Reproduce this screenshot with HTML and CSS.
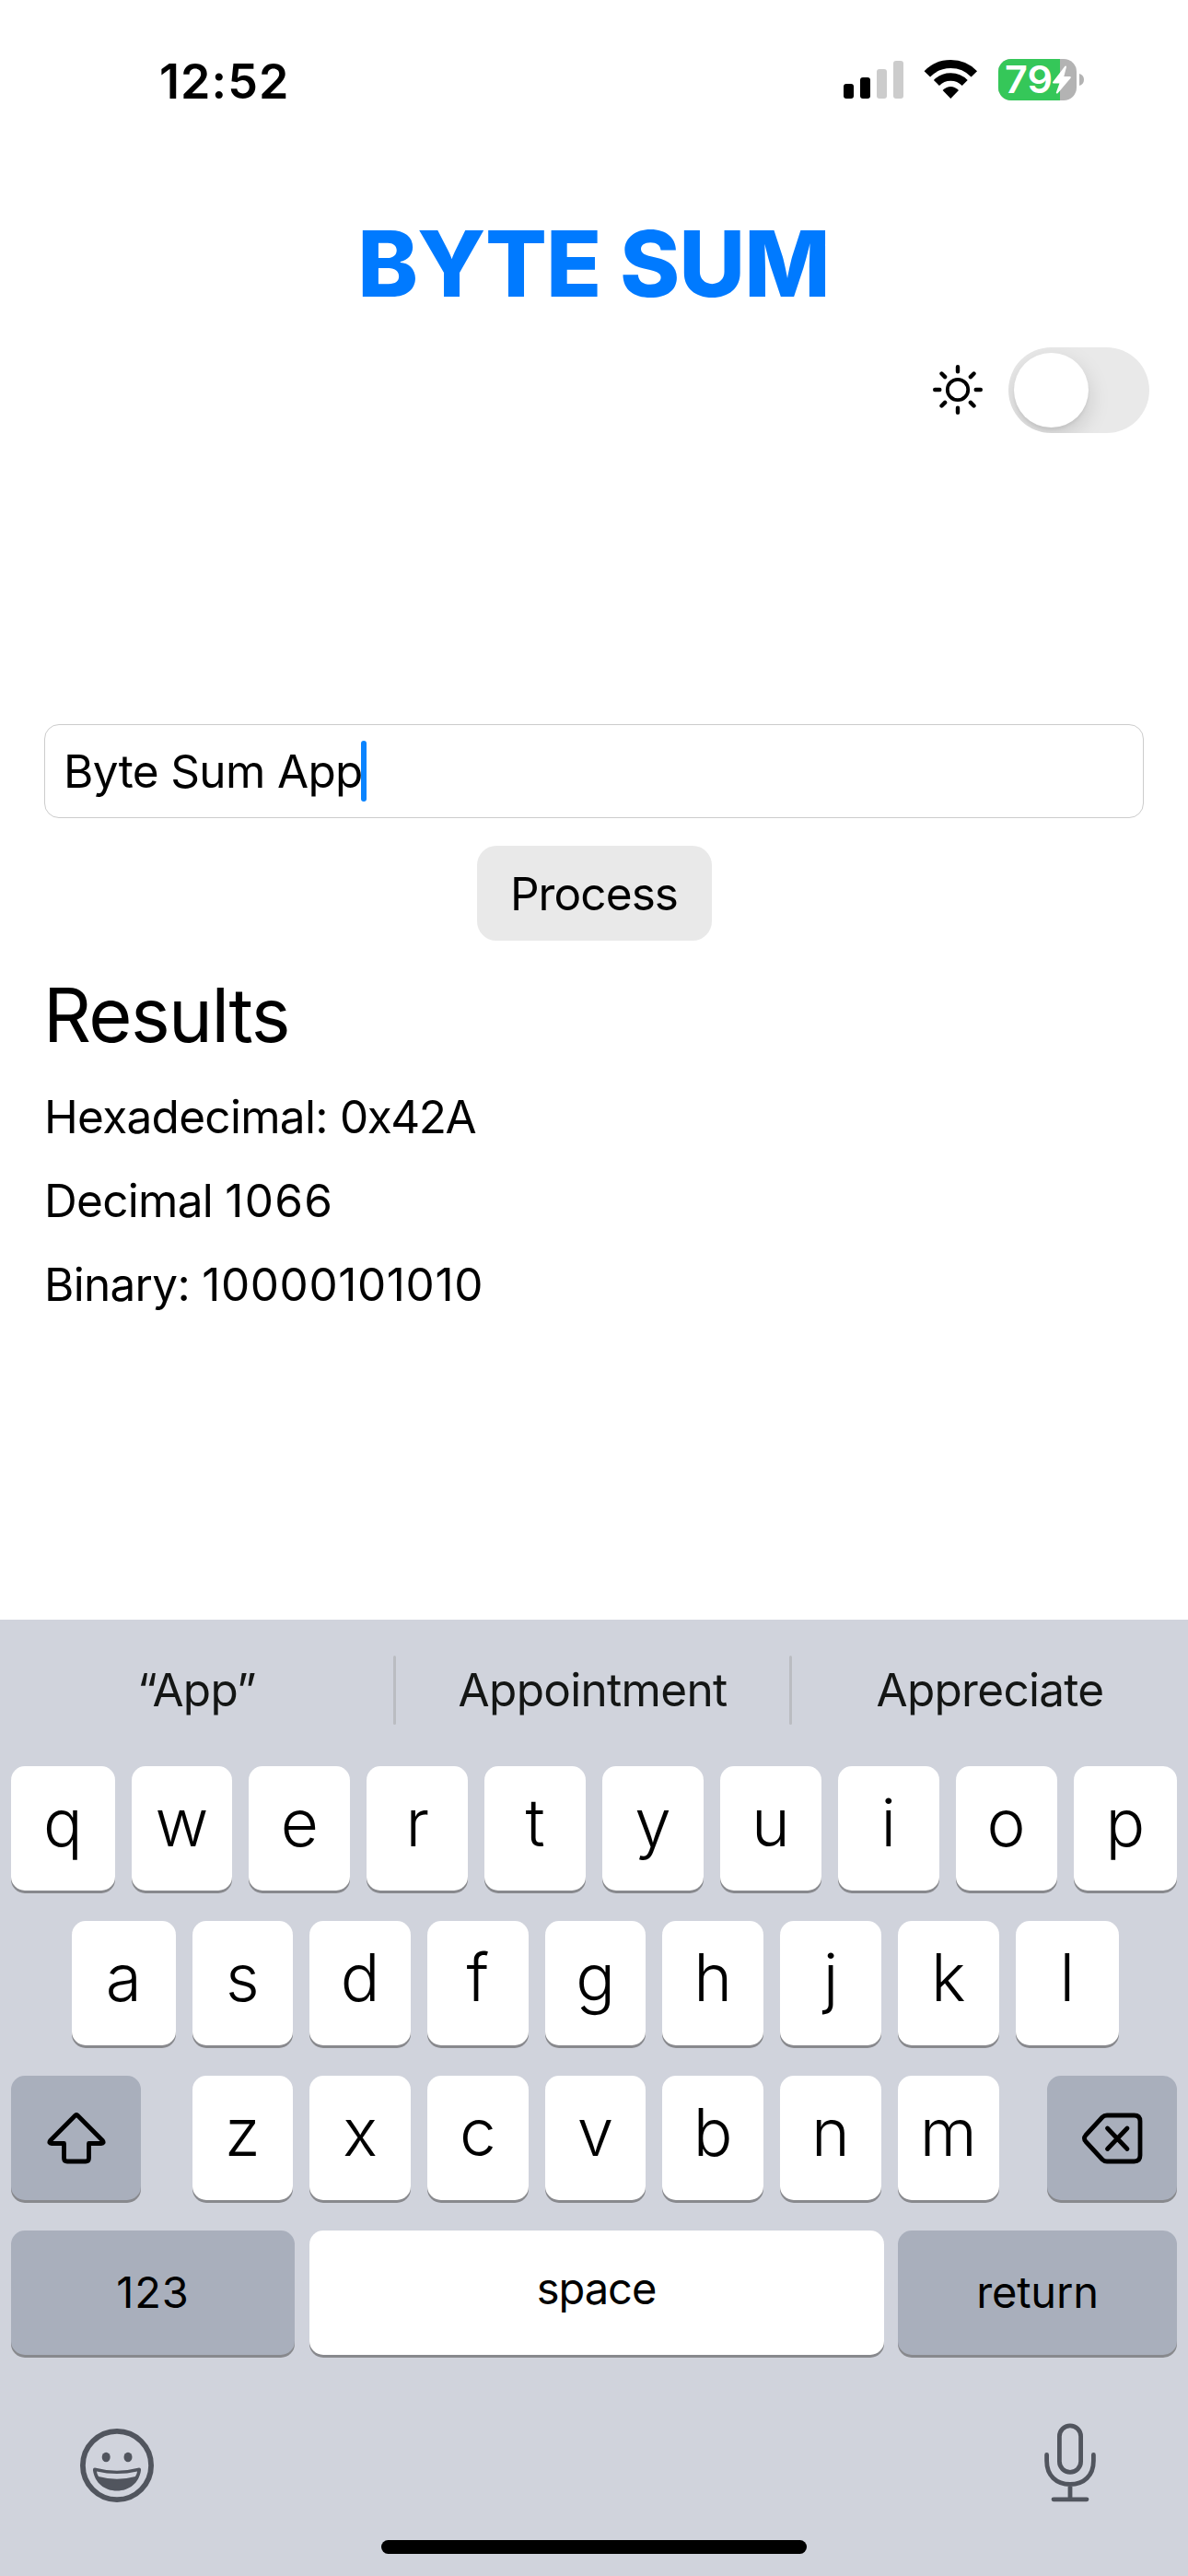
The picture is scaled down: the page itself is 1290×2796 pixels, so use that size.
FILE: index.html
```html
<!DOCTYPE html>
<html lang="en">
<head>
    <meta charset="UTF-8">
    <meta name="viewport" content="width=device-width, initial-scale=1.0">
    <title>Byte Sum</title>
    <link rel="stylesheet" href="styles.css">
</head>
<body>

<!-- Status bar -->
<div class="status-bar">
    <div class="time">12:52</div>
    <svg class="status-icons" width="262" height="50" viewBox="0 0 262 50">
        <rect x="0" y="29" width="11" height="16" rx="3"/>
        <rect x="18" y="22" width="11" height="23" rx="3"/>
        <rect x="36" y="13" width="11" height="32" rx="3" fill="#cccccc"/>
        <rect x="54" y="4" width="11" height="41" rx="3" fill="#cccccc"/>

        <g fill="none" stroke="#000">
            <path d="M90.8 18.3A35.5 35.5 0 0 1 141.8 18.3" stroke-width="9"/>
            <path d="M100.9 28A21.5 21.5 0 0 1 131.7 28" stroke-width="8.4"/>
        </g>
        <path d="M107.6 36Q116.3 28 125 36L116.3 45Z"/>

        <clipPath id="batteryShape"><rect x="168" y="2" width="85" height="45" rx="14"/></clipPath>
        <g clip-path="url(#batteryShape)">
            <rect x="168" y="2" width="85" height="45" fill="#b3b3b3"/>
            <rect x="168" y="2" width="67" height="45" fill="#35c759"/>
        </g>
        <path d="M256 18C259.500 19 261 21.500 261 24.500C261 27.500 259.500 30 256 31Z" fill="#b3b3b3"/>
        <text class="battery-text" x="175" y="39.300" textLength="52" lengthAdjust="spacingAndGlyphs">79</text>
        <path d="M241 10.500L228 27.500H235.800L231.800 38.500L245.800 22H238Z" fill="#fff" stroke="#fff" stroke-width="2" stroke-linejoin="round"/>
    </svg>
</div>

<h1>BYTE SUM</h1>

<!-- Theme switch -->
<div class="theme-row">
    <svg class="sun" width="54" height="54" viewBox="0 0 54 54" fill="none" stroke="#000" stroke-linecap="round">
        <circle cx="27" cy="27" r="11.200" stroke-width="3.800"/>
        <path stroke-width="4.400" d="M27 2.200V7.300M27 46.700V51.800M2.200 27H7.300M46.700 27H51.800M9.500 9.500L13.100 13.100M40.900 40.900L44.500 44.500M9.500 44.500L13.100 40.900M40.900 13.100L44.500 9.500"/>
    </svg>
    <div class="switch"><div class="knob"></div></div>
</div>

<div class="container">
    <div class="text-field"><span>Byte Sum App</span><div class="caret"></div></div>
    <button class="process-button">Process</button>

    <h2>Results</h2>
    <p>Hexadecimal: <span class="hex-value">0x42A</span></p>
    <p>Decimal <span class="dec-value">1066</span></p>
    <p>Binary: <span class="bin-value">10000101010</span></p>
</div>

<!-- Keyboard -->
<div class="keyboard">
    <div class="suggestions">
        <div>“App”</div>
        <div class="divider"></div>
        <div>Appointment</div>
        <div class="divider"></div>
        <div>Appreciate</div>
    </div>

    <div class="keys">
        <div class="row">
            <div class="key edge">q</div>
            <div class="key">w</div>
            <div class="key">e</div>
            <div class="key">r</div>
            <div class="key">t</div>
            <div class="key">y</div>
            <div class="key">u</div>
            <div class="key">i</div>
            <div class="key">o</div>
            <div class="key edge">p</div>
        </div>
        <div class="row row-middle">
            <div class="key edge">a</div>
            <div class="key">s</div>
            <div class="key">d</div>
            <div class="key">f</div>
            <div class="key">g</div>
            <div class="key">h</div>
            <div class="key">j</div>
            <div class="key">k</div>
            <div class="key edge">l</div>
        </div>
        <div class="row row-shift">
            <div class="key dark side">
                <svg width="64" height="56" viewBox="0 0 64 56" fill="none" stroke="#000" stroke-width="4.800" stroke-linejoin="round">
                    <path d="M30.600 3.200Q32 1.800 33.400 3.200L60.500 30.500Q62.400 33.500 59 33.500H45.500V49.500Q45.500 53 42 53H22Q18.500 53 18.500 49.500V33.500H5Q1.600 33.500 3.500 30.500Z"/>
                </svg>
            </div>
            <div class="letters">
                <div class="key">z</div>
                <div class="key">x</div>
                <div class="key">c</div>
                <div class="key">v</div>
                <div class="key">b</div>
                <div class="key">n</div>
                <div class="key">m</div>
            </div>
            <div class="key dark side">
                <svg width="66" height="56" viewBox="0 0 66 56" fill="none" stroke="#000" stroke-width="4.800" stroke-linejoin="round" stroke-linecap="round">
                    <path d="M27 3H56.500Q63 3 63 9.500V46.500Q63 53 56.500 53H27Q24 53 22 51L4 31.500Q1 28 4 24.500L22 5Q24 3 27 3Z"/>
                    <path d="M27.500 17L49 39.500M49 17L27.500 39.500"/>
                </svg>
            </div>
        </div>
        <div class="row row-bottom">
            <div class="key dark label">123</div>
            <div class="key label space">space</div>
            <div class="key dark label return">return</div>
        </div>
    </div>

    <div class="tools">
        <svg width="80" height="80" viewBox="0 0 80 80" fill="#51555e">
            <circle cx="40" cy="40" r="37.100" fill="none" stroke="#51555e" stroke-width="5.800"/>
            <ellipse cx="28.200" cy="31" rx="4.500" ry="5.200"/>
            <ellipse cx="52" cy="31" rx="4.500" ry="5.200"/>
            <path fill-rule="evenodd" d="M16 42.600Q40 49 64 42.600Q66.300 42.600 66 45.500C64 59 53.500 67.500 40 67.500S16 59 14 45.500Q13.700 42.600 16 42.600ZM18 46.500Q18.200 49.500 20 52Q40 57.500 60 52Q61.800 49.500 62 46.500Q40 51.500 18 46.500Z"/>
        </svg>
        <svg width="56" height="86" viewBox="0 0 56 86" fill="none" stroke="#51555e" stroke-width="4.800" stroke-linecap="round">
            <rect x="16.400" y="2.900" width="23.200" height="50.500" rx="11.600"/>
            <path d="M2.600 34.500V41C2.600 57 13 66.500 28 66.500S53.400 57 53.400 41V34.500M28 67V82M10 82.800H46"/>
        </svg>
    </div>
    <div class="home-indicator"></div>
</div>

</body>
</html>
```
FILE: styles.css
```css
* {
    box-sizing: border-box;
}
body {
    margin: 0;
    width: 1290px;
    height: 2796px;
    display: flex;
    flex-direction: column;
    overflow: hidden;
    background: white;
    color: black;
    font-family: Inter, "Liberation Sans", sans-serif;
    font-size: 49.5px;
    letter-spacing: -0.7px;
}
.status-bar {
    height: 176px;
    padding: 0 112px 0 173px;
    display: flex;
    justify-content: space-between;
    align-items: center;
}
.time {
    font-size: 52px;
    font-weight: 600;
    letter-spacing: 1.1px;
}
.status-icons {
    margin-bottom: 2px;
}
.battery-text {
    font-size: 40.5px;
    font-weight: 600;
    letter-spacing: 0;
    fill: white;
}
h1 {
    margin: 50px 0 0;
    text-align: center;
    font-size: 99px;
    font-weight: 800;
    line-height: 120px;
    letter-spacing: -1px;
    text-indent: -1px;
    color: #007aff;
}
.theme-row {
    margin-top: 31px;
    padding-right: 42px;
    display: flex;
    justify-content: flex-end;
    align-items: center;
    gap: 28px;
}
.sun {
    margin-bottom: 1px;
}
.switch {
    width: 153px;
    height: 93px;
    padding: 6px;
    border-radius: 47px;
    background: #e9e9e9;
    overflow: hidden;
}
.knob {
    width: 81px;
    height: 81px;
    border-radius: 50%;
    background: white;
    box-shadow: 0 9px 24px rgba(0, 0, 0, 0.15), 0 3px 3px rgba(0, 0, 0, 0.05);
}
.container {
    margin-top: 316px;
    padding: 0 48px;
    display: flex;
    flex-direction: column;
}
.text-field {
    height: 102px;
    padding: 0 20px;
    display: flex;
    align-items: center;
    border: 1px solid #cccccc;
    border-radius: 16px;
    letter-spacing: -0.65px;
}
.caret {
    width: 6px;
    height: 66px;
    margin-left: -2px;
    border-radius: 3px;
    background: #0a84ff;
}
.process-button {
    align-self: center;
    width: 255px;
    height: 103px;
    margin-top: 30px;
    padding: 0;
    border: none;
    border-radius: 21px;
    background: #e9e9e9;
    color: black;
    font: inherit;
    letter-spacing: -0.9px;
}
h2 {
    margin: 31px 0 15px;
    font-size: 81px;
    font-weight: 400;
    line-height: 100px;
    letter-spacing: -1.6px;
    text-indent: -1px;
}
p {
    margin: 0;
    line-height: 91px;
}
.hex-value {
    letter-spacing: -1.5px;
}
.dec-value {
    letter-spacing: 1.3px;
}
.bin-value {
    letter-spacing: 0.6px;
}
.keyboard {
    height: 1038px;
    margin-top: auto;
    background: #d0d3dc;
}
.suggestions {
    height: 159px;
    padding: 39px 0 45px;
    display: grid;
    grid-template-columns: 427px 3px 427px 3px 430px;
    text-align: center;
    line-height: 75px;
    color: #141615;
}
.divider {
    border-radius: 2px;
    background: #bbbdc2;
}
.keys {
    padding: 0 12px;
    display: grid;
    gap: 33px;
}
.row {
    display: flex;
    gap: 18px;
}
.row-middle {
    padding: 0 63px 0 66px;
}
.row-shift {
    justify-content: space-between;
}
.letters {
    width: 876px;
    margin-left: 3px;
    display: flex;
    gap: 18px;
}
.row-bottom {
    display: grid;
    grid-template-columns: 308px 624px 303px;
    justify-content: space-between;
    gap: 0;
}
.key {
    flex: 1;
    height: 135px;
    border-radius: 15px;
    background: white;
    box-shadow: 0 3px 0 #88898d;
    text-align: center;
    font-size: 71px;
    font-weight: 350;
    line-height: 122px;
    letter-spacing: 0;
}
.edge {
    flex: 0 0 112.5px;
}
.dark {
    background: #a9afbc;
}
.side {
    flex: 0 0 141px;
    display: flex;
    justify-content: center;
    align-items: center;
}
.label {
    font-size: 47px;
    font-weight: 400;
    line-height: 134px;
    letter-spacing: 0.9px;
}
.space {
    line-height: 126px;
    letter-spacing: -1px;
}
.return {
    letter-spacing: -0.2px;
}
.tools {
    padding: 74px 100px 0 87px;
    display: flex;
    justify-content: space-between;
    align-items: flex-end;
}
.home-indicator {
    width: 462px;
    height: 15px;
    margin: 41px auto 0;
    border-radius: 8px;
    background: black;
}
```
